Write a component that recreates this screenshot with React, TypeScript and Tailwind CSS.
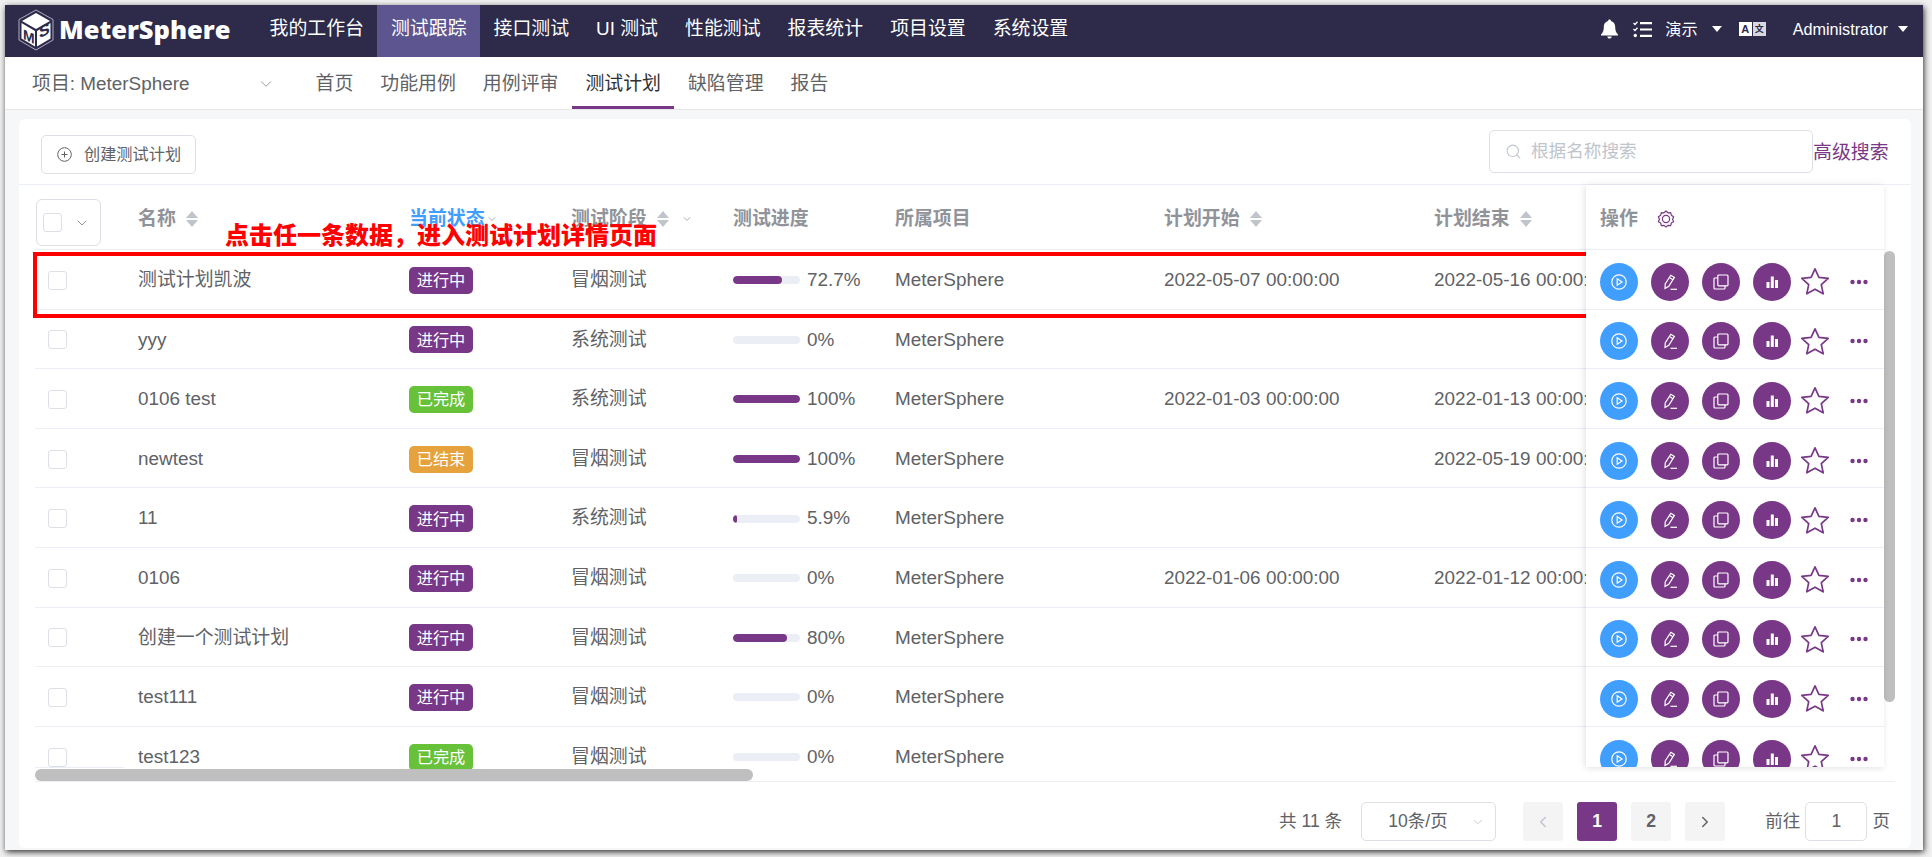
import { ChevronDown, ChevronLeft, ChevronRight, Search } from 'lucide-react'

const TOP_NAV = ['我的工作台', '测试跟踪', '接口测试', 'UI 测试', '性能测试', '报表统计', '项目设置', '系统设置']
const SUB_NAV = ['首页', '功能用例', '用例评审', '测试计划', '缺陷管理', '报告']
const COLS = 'grid w-[1719px] shrink-0 grid-cols-[103px_271px_162px_162px_162px_269px_270px_320px] items-center'

type Status = '进行中' | '已完成' | '已结束'

const PLANS: { name: string; status: Status; stage: string; progress: number; label: string; start: string; end: string }[] = [
  { name: '测试计划凯波', status: '进行中', stage: '冒烟测试', progress: 72.7, label: '72.7%', start: '2022-05-07 00:00:00', end: '2022-05-16 00:00:00' },
  { name: 'yyy', status: '进行中', stage: '系统测试', progress: 0, label: '0%', start: '', end: '' },
  { name: '0106 test', status: '已完成', stage: '系统测试', progress: 100, label: '100%', start: '2022-01-03 00:00:00', end: '2022-01-13 00:00:00' },
  { name: 'newtest', status: '已结束', stage: '冒烟测试', progress: 100, label: '100%', start: '', end: '2022-05-19 00:00:00' },
  { name: '11', status: '进行中', stage: '系统测试', progress: 5.9, label: '5.9%', start: '', end: '' },
  { name: '0106', status: '进行中', stage: '冒烟测试', progress: 0, label: '0%', start: '2022-01-06 00:00:00', end: '2022-01-12 00:00:00' },
  { name: '创建一个测试计划', status: '进行中', stage: '冒烟测试', progress: 80, label: '80%', start: '', end: '' },
  { name: 'test111', status: '进行中', stage: '冒烟测试', progress: 0, label: '0%', start: '', end: '' },
  { name: 'test123', status: '已完成', stage: '冒烟测试', progress: 0, label: '0%', start: '', end: '' },
]

const STATUS_BG: Record<Status, string> = {
  进行中: 'bg-[#783887]',
  已完成: 'bg-[#67c23a]',
  已结束: 'bg-[#e6a23c]',
}

function Logo() {
  return (
    <svg width="36" height="42" viewBox="0 0 36 42" className="shrink-0">
      <path d="M18 1 L35 10.5 V31 L18 41 L1 31 V10.5 Z" fill="none" stroke="#cfcfe0" strokeWidth="0.8" />
      <path d="M18 4 L32 12 L18 20 L4 12 Z" fill="#fff" />
      <path d="M3.5 14 L17 22 V37.5 L3.5 29.5 Z" fill="#fff" />
      <path d="M32.5 14 L19 22 V37.5 L32.5 29.5 Z" fill="#fff" />
      <text x="5" y="31" fontSize="14" fontWeight="900" fill="#2d2a4a" fontFamily="'Liberation Sans', sans-serif" transform="skewY(25) translate(0 -3.5)">M</text>
      <text x="21" y="27" fontSize="16" fontWeight="900" fill="#2d2a4a" fontFamily="'Liberation Sans', sans-serif" transform="skewY(-25) translate(0 12)">S</text>
    </svg>
  )
}

function Bell() {
  return (
    <svg width="17" height="20" viewBox="0 0 17 20" fill="#fff">
      <path d="M8.5 0.5 C9.4 0.5 10 1.1 10 2 C13 2.8 14.2 5.2 14.2 8 C14.2 11.5 15 13.6 17 15.6 V16.4 H0 V15.6 C2 13.6 2.8 11.5 2.8 8 C2.8 5.2 4 2.8 7 2 C7 1.1 7.6 0.5 8.5 0.5 Z" />
      <path d="M6.3 17.4 H10.7 C10.5 18.8 9.6 19.6 8.5 19.6 C7.4 19.6 6.5 18.8 6.3 17.4 Z" />
    </svg>
  )
}

function TaskList() {
  return (
    <svg width="19" height="17" viewBox="0 0 19 17" fill="none" stroke="#fff" className="block">
      <path d="M0.5 2 L2 3.5 L4.5 0.8 M0.5 8 L2 9.5 L4.5 6.8" strokeWidth="1.3" />
      <circle cx="2.3" cy="14.5" r="1.7" fill="#fff" stroke="none" />
      <path d="M7 2.2 H19 M7 8.5 H19 M7 14.8 H19" strokeWidth="2.2" />
    </svg>
  )
}

function Translate() {
  return (
    <div className="flex h-[14px] w-[27px] gap-px text-[11px] font-bold leading-[14px]">
      <span className="w-[13px] bg-white text-center text-[#2d2a4a]">A</span>
      <span className="w-[13px] bg-[#d8d8e0] text-center text-[9px] text-[#2d2a4a]">文</span>
    </div>
  )
}

function Caret() {
  return <span className="block h-0 w-0 border-x-[5px] border-t-[6px] border-x-transparent border-t-white" />
}

function Sort() {
  return (
    <span className="ml-[10px] flex flex-col gap-[2px]">
      <span className="h-0 w-0 border-x-[6.5px] border-b-[7px] border-x-transparent border-b-[#c0c4cc]" />
      <span className="h-0 w-0 border-x-[6.5px] border-t-[7px] border-x-transparent border-t-[#c0c4cc]" />
    </span>
  )
}

function TopBar() {
  return (
    <div className="flex h-[52px] items-center bg-[#2d2a4a] text-white">
      <div className="ml-[13px] flex w-[238px] items-center gap-[5px] pb-[3px]">
        <Logo />
        <span className="font-['Open_Sans',sans-serif] text-[25.5px] font-extrabold leading-none">MeterSphere</span>
      </div>
      {TOP_NAV.map((item, i) => (
        <div key={item} className={`flex h-full items-center px-[13.5px] pb-[3px] text-[18.9px] ${i === 1 ? 'bg-[#5c5590]' : ''}`}>
          {item}
        </div>
      ))}
      <div className="ml-auto flex items-center pb-[3px] pr-[15px]">
        <Bell />
        <span className="ml-[15px]"><TaskList /></span>
        <span className="ml-[13px] text-[16.2px]">演示</span>
        <span className="ml-[14px]"><Caret /></span>
        <span className="ml-[17px]"><Translate /></span>
        <span className="ml-[27px] text-[16.2px]">Administrator</span>
        <span className="ml-[10px]"><Caret /></span>
      </div>
    </div>
  )
}

function SubBar() {
  return (
    <div className="flex h-[53px] items-center border-b border-[#e6e6e6] bg-white text-[18.9px] text-[#606266]">
      <div className="flex w-[297px] items-center pl-[27px] pr-[27px] pt-[3px]">
        <span>项目: MeterSphere</span>
        <ChevronDown className="ml-auto h-[18px] w-[18px] text-[#909399]" strokeWidth={1.2} />
      </div>
      {SUB_NAV.map((item, i) => (
        <div
          key={item}
          className={`flex h-full items-center px-[13.5px] ${i === 3 ? 'border-b-[3px] border-[#783887] pt-[6px] text-[#303133]' : 'pt-[3px]'}`}
        >
          {item}
        </div>
      ))}
    </div>
  )
}

function Toolbar() {
  return (
    <div className="flex h-[66px] items-start border-b border-[#ebeef5]">
      <button className="ml-[22px] mt-[16px] flex h-[39px] w-[155px] items-center rounded-[5px] border border-[#dcdfe6] pl-[15px] text-[16.2px] text-[#606266]">
        <svg width="15" height="15" viewBox="0 0 15 15" fill="none" stroke="#606266" strokeWidth="1">
          <circle cx="7.5" cy="7.5" r="6.8" />
          <path d="M7.5 4.5 V10.5 M4.5 7.5 H10.5" />
        </svg>
        <span className="ml-[12px]">创建测试计划</span>
      </button>
      <div className="ml-auto mt-[11px] flex h-[43px] w-[324px] items-center rounded-[5px] border border-[#dcdfe6] pl-[15px]">
        <Search className="h-[17px] w-[17px] text-[#c0c4cc]" strokeWidth={1.5} />
        <span className="ml-[9px] text-[17.6px] text-[#c0c4cc]">根据名称搜索</span>
      </div>
      <a className="mr-[22px] mt-[22px] w-[76px] text-[18.9px] leading-[24px] text-[#783887]">高级搜索</a>
    </div>
  )
}

function TableHeader() {
  return (
    <div className={`${COLS} h-[65px] border-b border-[#ebeef5] pt-[5px] text-[18.9px] font-bold text-[#909399]`}>
      <div className="ml-[1px] mt-[6px] flex h-[47px] w-[65px] items-center gap-[12px] rounded-[6px] border border-[#dcdfe6] pl-[6px]">
        <span className="h-[19px] w-[19px] rounded-[3px] border border-[#dcdfe6]" />
        <ChevronDown className="h-[16px] w-[16px] text-[#909399]" strokeWidth={1.5} />
      </div>
      <div className="flex items-center">名称<Sort /></div>
      <div className="flex items-center text-[#409eff]">
        当前状态
        <ChevronDown className="ml-[1px] h-[12px] w-[12px] text-[#909399]" strokeWidth={1.5} />
      </div>
      <div className="flex items-center">
        测试阶段
        <Sort />
        <ChevronDown className="ml-[12px] h-[12px] w-[12px] text-[#909399]" strokeWidth={1.5} />
      </div>
      <div>测试进度</div>
      <div>所属项目</div>
      <div className="flex items-center">计划开始<Sort /></div>
      <div className="flex items-center">计划结束<Sort /></div>
    </div>
  )
}

function PlanRow({ plan }: { plan: (typeof PLANS)[number] }) {
  return (
    <div className={`${COLS} h-[59.6px] border-b border-[#ebeef5] pt-[2px] text-[18.9px] text-[#606266]`}>
      <div className="pl-[13px]">
        <div className="h-[19px] w-[19px] rounded-[3px] border border-[#dcdfe6]" />
      </div>
      <div>{plan.name}</div>
      <div>
        <span className={`flex h-[27px] w-[64px] items-center justify-center rounded-[5px] text-[16.2px] text-white ${STATUS_BG[plan.status]}`}>
          {plan.status}
        </span>
      </div>
      <div>{plan.stage}</div>
      <div className="flex items-center">
        <div className="h-[8px] w-[67px] overflow-hidden rounded-full bg-[#ebeef5]">
          <div className="h-full rounded-full bg-[#783887]" style={{ width: `${plan.progress}%` }} />
        </div>
        <span className="ml-[7px]">{plan.label}</span>
      </div>
      <div>MeterSphere</div>
      <div>{plan.start}</div>
      <div className="whitespace-nowrap">{plan.end}</div>
    </div>
  )
}

function RoundIcon({ blue, children }: { blue?: boolean; children: React.ReactNode }) {
  return (
    <span className={`flex h-[38px] w-[38px] shrink-0 items-center justify-center rounded-full ${blue ? 'bg-[#409eff]' : 'bg-[#783887]'}`}>
      <svg width="18" height="18" viewBox="0 0 18 18" fill="none" stroke="#fff" strokeWidth="1.2">
        {children}
      </svg>
    </span>
  )
}

function Actions() {
  return (
    <div className="flex h-[59.6px] shrink-0 items-center border-b border-[#ebeef5] pl-[14px] pt-[5px]">
      <RoundIcon blue>
        <circle cx="9" cy="9" r="7.2" />
        <path d="M7.2 5.8 L12 9 L7.2 12.2 Z" />
      </RoundIcon>
      <span className="ml-[13px]">
        <RoundIcon>
          <path d="M4 15.5 L4.2 11 L9.8 2.2 L13.4 4.4 L7.8 13.3 Z" />
          <path d="M8.4 4.6 L12 6.8" />
          <path d="M9.5 16.3 H16" />
        </RoundIcon>
      </span>
      <span className="ml-[13px]">
        <RoundIcon>
          <rect x="5.8" y="2" width="10.2" height="10.8" rx="1" />
          <path d="M5.8 5 H3 A1 1 0 0 0 2 6 V15 A1 1 0 0 0 3 16 H12 A1 1 0 0 0 13 15 V12.8" />
        </RoundIcon>
      </span>
      <span className="ml-[13px]">
        <RoundIcon>
          <path d="M3.5 9 H6.5 V15 H3.5 Z M7.8 3.5 H10.8 V15 H7.8 Z M12 7 H15 V15 H12 Z" fill="#fff" stroke="none" />
        </RoundIcon>
      </span>
      <svg width="30" height="29" viewBox="0 0 30 29" fill="none" stroke="#783887" strokeWidth="1.7" className="ml-[9px] shrink-0">
        <path d="M15 1.8 L18.9 10.3 L28.2 11.3 L21.3 17.6 L23.2 26.8 L15 22.2 L6.8 26.8 L8.7 17.6 L1.8 11.3 L11.1 10.3 Z" strokeLinejoin="round" />
      </svg>
      <svg width="18" height="6" viewBox="0 0 18 6" fill="#783887" className="ml-[20px] shrink-0">
        <circle cx="2.5" cy="3" r="2.2" />
        <circle cx="9" cy="3" r="2.2" />
        <circle cx="15.5" cy="3" r="2.2" />
      </svg>
    </div>
  )
}

function PlanTable() {
  return (
    <div className="relative mx-[16px] flex h-[597px] border-b border-[#ebeef5]">
      <div className="flex w-[1551px] flex-col overflow-hidden">
        <TableHeader />
        {PLANS.map((plan) => (
          <PlanRow key={plan.name} plan={plan} />
        ))}
      </div>
      <div className="z-10 flex h-[582px] w-[298px] shrink-0 flex-col overflow-hidden bg-white shadow-[-2px_0_8px_rgba(0,0,0,0.08),0_2px_6px_rgba(0,0,0,0.05)]">
        <div className="flex h-[65px] shrink-0 items-center border-b border-[#ebeef5] pl-[14px] pt-[4px] text-[18.9px] font-bold text-[#909399]">
          操作
          <svg width="18" height="18" viewBox="0 0 18 18" fill="none" stroke="#783887" strokeWidth="1.2" className="ml-[19px]">
            <path d="M9 1 L11 2.8 L13.7 2.6 L14.3 5.2 L16.6 6.7 L15.6 9.2 L16.6 11.7 L14.3 13 L13.7 15.6 L11 15.4 L9 17 L7 15.4 L4.3 15.6 L3.7 13 L1.4 11.7 L2.4 9.2 L1.4 6.7 L3.7 5.2 L4.3 2.6 L7 2.8 Z" strokeLinejoin="round" />
            <circle cx="9" cy="9" r="3.6" />
          </svg>
        </div>
        {PLANS.map((plan) => (
          <Actions key={plan.name} />
        ))}
      </div>
      <div className="w-[11px] pt-[66px]">
        <div className="h-[451px] rounded-full bg-[#bfbfbf]" />
      </div>
      {/* overlay scrollbar and the fixed first column's edge */}
      <div className="absolute left-0 top-[582px] h-px w-[89px] bg-[#ebeef5]" />
      <div className="absolute bottom-0 left-0 h-[12px] w-[718px] rounded-full bg-[#bfbfbf]" />
    </div>
  )
}

function PageButton({ active, children }: { active?: boolean; children: React.ReactNode }) {
  return (
    <span className={`flex h-[39px] w-[40px] items-center justify-center rounded-[3px] text-[17.6px] font-bold ${active ? 'bg-[#783887] text-white' : 'bg-[#f4f4f5] text-[#606266]'}`}>
      {children}
    </span>
  )
}

function Pagination() {
  return (
    <div className="flex h-[66px] items-center justify-end pr-[21px] pt-[13px] text-[17.6px] text-[#606266]">
      <span>共 11 条</span>
      <div className="ml-[19px] flex h-[39px] w-[135px] items-center rounded-[5px] border border-[#dcdfe6] pl-[26px] pr-[10px]">
        <span>10条/页</span>
        <ChevronDown className="ml-auto h-[14px] w-[14px] text-[#c0c4cc]" strokeWidth={1.5} />
      </div>
      <div className="ml-[27px] flex gap-[14px]">
        <PageButton><ChevronLeft className="h-[18px] w-[18px] text-[#c0c4cc]" strokeWidth={2} /></PageButton>
        <PageButton active>1</PageButton>
        <PageButton>2</PageButton>
        <PageButton><ChevronRight className="h-[18px] w-[18px]" strokeWidth={2} /></PageButton>
      </div>
      <span className="ml-[40px]">前往</span>
      <div className="ml-[5px] flex h-[39px] w-[62px] items-center justify-center rounded-[5px] border border-[#dcdfe6]">1</div>
      <span className="ml-[5px]">页</span>
    </div>
  )
}

export default function App() {
  return (
    <div className="relative h-[857px] w-[1932px] overflow-hidden bg-[#f0f0f0] font-['Liberation_Sans','Noto_Sans_CJK_SC',sans-serif]">
      <div className="ml-[5px] mt-[5px] flex h-[845px] w-[1918px] flex-col bg-[#f6f7f8] shadow-[1px_2px_6px_rgba(0,0,0,0.8)]">
        <TopBar />
        <SubBar />
        <div className="ml-[14px] mr-[12px] mt-[9px] h-[729px] rounded-[6px] bg-white">
          <Toolbar />
          <PlanTable />
          <Pagination />
        </div>
      </div>
      {/* annotation drawn over the screenshot */}
      <div className="absolute left-[33px] top-[252px] h-[66px] w-[1846px] border-4 border-[#ff0000]" />
      <div className="absolute left-[225px] top-[222px] whitespace-nowrap text-[24px] font-black leading-[28px] text-[#ff0000]">
        点击任一条数据，进入测试计划详情页面
      </div>
    </div>
  )
}
